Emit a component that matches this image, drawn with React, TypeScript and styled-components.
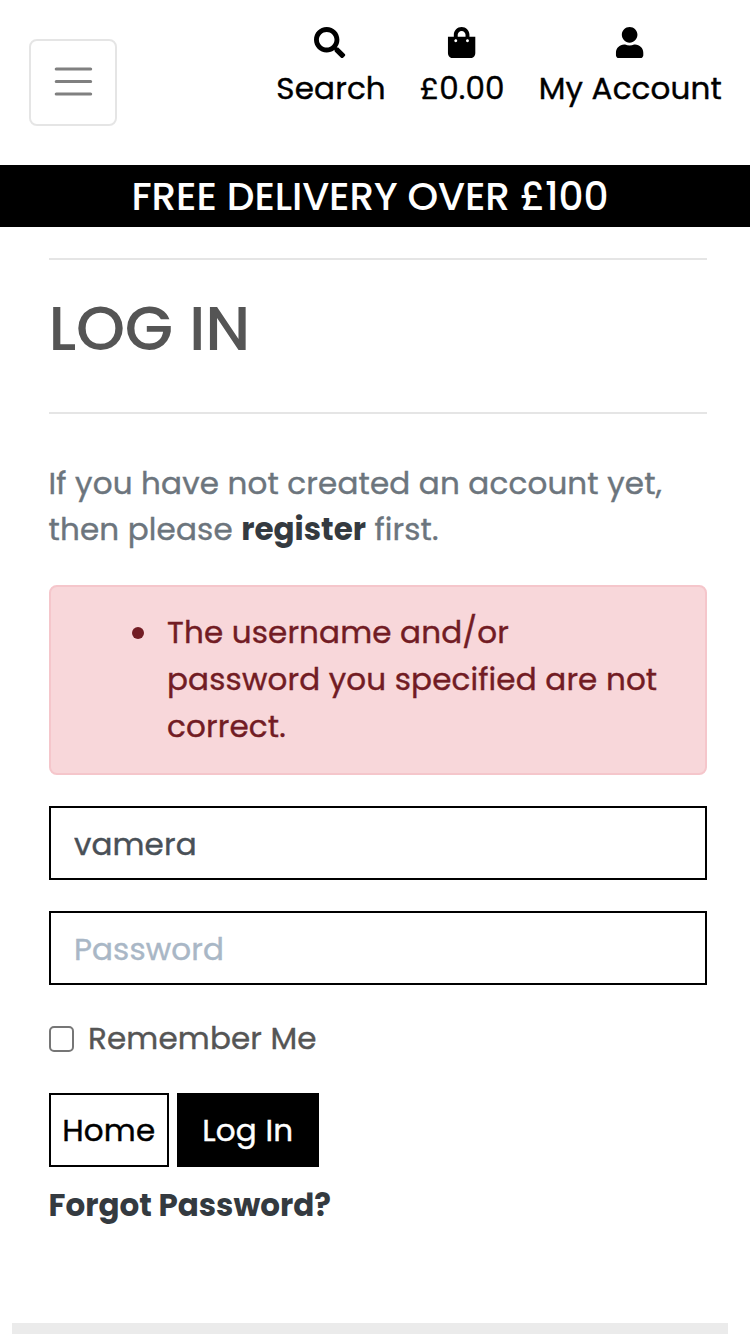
import React from "react";
import styled, { createGlobalStyle } from "styled-components";
import { FaSearch, FaShoppingBag, FaUser } from "react-icons/fa";

const GlobalStyle = createGlobalStyle`
  *, *::before, *::after { box-sizing: border-box; }
  body {
    margin: 0;
    background: #fff;
    color: #555;
    font: 400 31px/46.875px Poppins, Inter, sans-serif;
    letter-spacing: 0.15px;
    -webkit-text-stroke-width: 0.4px;
    overflow: hidden;
  }
`;

const Page = styled.div`
  height: 1334px;
  overflow: hidden;
`;

const Header = styled.header`
  display: flex;
  justify-content: space-between;
  align-items: flex-start;
  height: 165px;
  padding: 27px 28px 0 29px;
`;

const MenuButton = styled.button`
  display: flex;
  align-items: center;
  justify-content: center;
  width: 87.5px;
  height: 87px;
  margin: 12px 0 0;
  padding: 0 0 2px 2px;
  border: 2px solid rgba(0, 0, 0, 0.1);
  border-radius: 7.8px;
  background: transparent;
`;

const HeaderLinks = styled.nav`
  display: flex;
  gap: 34px;
`;

const HeaderLink = styled.a`
  display: flex;
  flex-direction: column;
  align-items: center;
  gap: 7px;
  color: #000;
  text-decoration: none;

  svg { margin-left: -2px; }
`;

const Banner = styled.div`
  height: 62px;
  padding: 1px 10px 0 0;
  background: #000;
  color: #fff;
  font-size: 39.06px;
  font-weight: 500;
  letter-spacing: -0.12px;
  line-height: 62px;
  text-align: center;
  -webkit-text-stroke-width: 0;
`;

const Main = styled.main`
  padding: 31px 43px 0 48.5px;
`;

const Rule = styled.hr`
  margin: 0;
  border: 0;
  border-top: 2px solid rgba(0, 0, 0, 0.1);
`;

const Title = styled.h1`
  margin: 31px 0 46px;
  color: #555;
  font-size: 62.5px;
  font-weight: 500;
  letter-spacing: -0.2px;
  line-height: 75px;
  -webkit-text-stroke-width: 0;
`;

const Intro = styled.p`
  margin: 45.5px 0 32px;
  color: #6c757d;
`;

const StrongLink = styled.a`
  color: #343a40;
  font-weight: 700;
  letter-spacing: 0;
  text-decoration: none;
  -webkit-text-stroke-width: 0;
`;

const Alert = styled.div`
  height: 190px;
  padding: 22px 40px 0 81px;
  border: 2px solid #f5c6cb;
  border-radius: 7.8px;
  background: #f8d7da;
  color: #721c24;
`;

const ErrorList = styled.ul`
  margin: 0;
  padding: 0;
  list-style: none;
`;

const ErrorItem = styled.li`
  display: flex;
  gap: 23.5px;

  &::before {
    content: "";
    flex: none;
    width: 12px;
    height: 12px;
    margin-top: 18px;
    border-radius: 50%;
    background: currentColor;
  }
`;

const Form = styled.form`
  padding-top: 31px;
`;

const Field = styled.input`
  display: block;
  width: 100%;
  height: 74px;
  margin: 0 0 31px;
  padding: 2px 23.4px 0;
  border: 2px solid #000;
  border-radius: 0;
  background: #fff;
  color: #495057;
  font: inherit;
  letter-spacing: inherit;
  outline: none;
  -webkit-text-stroke-width: 0.4px;

  &::placeholder { color: #a9b7c6; opacity: 1; }
`;

const Remember = styled.label`
  display: flex;
  align-items: center;
  gap: 14px;
  height: 45px;
`;

const Checkbox = styled.input`
  appearance: none;
  width: 25.5px;
  height: 25.5px;
  margin: 0;
  border: 2px solid #767676;
  border-radius: 5px;
  background: #fff;
`;

const Actions = styled.div`
  display: flex;
  gap: 7.5px;
  margin: 32px 0 15px;
`;

const Button = styled.button<{ $solid?: boolean }>`
  width: ${(p) => (p.$solid ? 142.5 : 120.5)}px;
  height: 74px;
  padding: 0;
  border: 2px solid #000;
  background: ${(p) => (p.$solid ? "#000" : "#fff")};
  color: ${(p) => (p.$solid ? "#fff" : "#000")};
  font: inherit;
  letter-spacing: inherit;
  -webkit-text-stroke-width: 0.4px;
`;

const FooterEdge = styled.div`
  height: 12px;
  margin: 94px 22px 0 12px;
  background: #ebebeb;
`;

const links = [
  { label: "Search", Icon: FaSearch },
  { label: "£0.00", Icon: FaShoppingBag },
  { label: "My Account", Icon: FaUser },
];

export default function App() {
  return (
    <Page>
      <GlobalStyle />
      <Header>
        <MenuButton aria-label="Menu">
          <svg width="46.875" height="46.875" viewBox="0 0 30 30">
            <path
              d="M4 7h22M4 15h22M4 23h22"
              stroke="#808080"
              strokeWidth="2"
              strokeLinecap="round"
              strokeMiterlimit="10"
            />
          </svg>
        </MenuButton>
        <HeaderLinks>
          {links.map(({ label, Icon }) => (
            <HeaderLink key={label}>
              <Icon size={31.25} />
              <span>{label}</span>
            </HeaderLink>
          ))}
        </HeaderLinks>
      </Header>
      <Banner>FREE DELIVERY OVER £100</Banner>
      <Main>
        <Rule />
        <Title>LOG IN</Title>
        <Rule />
        <Intro>
          If you have not created an account yet, then please <StrongLink>register</StrongLink> first.
        </Intro>
        <Alert>
          <ErrorList>
            <ErrorItem>The username and/or password you specified are not correct.</ErrorItem>
          </ErrorList>
        </Alert>
        <Form>
          <Field type="text" defaultValue="vamera" />
          <Field type="password" placeholder="Password" />
          <Remember>
            <Checkbox type="checkbox" />
            Remember Me
          </Remember>
          <Actions>
            <Button type="button">Home</Button>
            <Button type="button" $solid>Log In</Button>
          </Actions>
          <StrongLink>Forgot Password?</StrongLink>
        </Form>
      </Main>
      <FooterEdge />
    </Page>
  );
}
